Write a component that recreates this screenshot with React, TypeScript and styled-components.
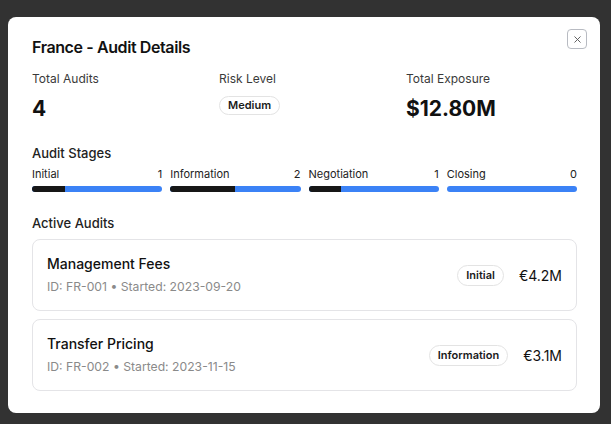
import React from "react";
import styled, { createGlobalStyle } from "styled-components";

const GlobalStyle = createGlobalStyle`
  html, body { margin: 0; padding: 0; background: #323232; }
  body { font-family: Inter, "Noto Sans", sans-serif; color: #111111; -webkit-font-smoothing: antialiased; }
  * { box-sizing: border-box; }
`;

const Backdrop = styled.div`
  min-height: 424px;
  padding: 17px 11px 0 8px;
  display: flex;
  align-items: flex-start;
`;

const Dialog = styled.div`
  position: relative;
  width: 592px;
  background: #ffffff;
  border-radius: 8px;
  padding: 22px 23px 22px 24px;
  display: flex;
  flex-direction: column;
`;

const CloseButton = styled.button`
  position: absolute;
  top: 12px;
  right: 13px;
  width: 20px;
  height: 20px;
  padding: 0;
  border: 1.5px solid #b8bbc2;
  border-radius: 4px;
  background: #ffffff;
  display: flex;
  align-items: center;
  justify-content: center;
  color: #555;
`;

const Title = styled.h2`
  margin: 0;
  font-size: 16px;
  line-height: 16px;
  font-weight: 600;
  letter-spacing: -0.025em;
`;

const StatsGrid = styled.div`
  display: grid;
  grid-template-columns: repeat(3, 1fr);
  gap: 16px;
  margin-top: 16px;
`;

const Stat = styled.div`
  display: flex;
  flex-direction: column;
  gap: 8px;
`;

const StatLabel = styled.div`
  font-size: 12px;
  line-height: 16px;
  color: #3a3a3a;
`;

const StatValue = styled.div`
  font-size: 21px;
  line-height: 28px;
  font-weight: 700;
  height: 28px;
  display: flex;
  align-items: flex-start;
`;

const Badge = styled.span<{ $mt?: number }>`
  display: inline-flex;
  align-items: center;
  height: ${(p) => (p.$mt !== undefined ? 19 : 21)}px;
  padding: 0 8px;
  margin-top: ${(p) => p.$mt ?? 0}px;
  border: 1px solid #e3e3e3;
  border-radius: 999px;
  font-size: 11px;
  font-weight: 600;
  color: #1a1a1a;
  background: #fff;
  line-height: 1;
`;

const SectionTitle = styled.div<{ $mt: number }>`
  margin-top: ${(p) => p.$mt}px;
  font-size: 13px;
  line-height: 20px;
  font-weight: 500;
  color: #222;
`;

const StagesGrid = styled.div`
  display: grid;
  grid-template-columns: repeat(4, 1fr);
  gap: 8px;
  margin-top: 3px;
`;

const Stage = styled.div`
  display: flex;
  flex-direction: column;
  gap: 4px;
`;

const StageHead = styled.div`
  display: flex;
  justify-content: space-between;
  font-size: 11px;
  line-height: 16px;
  color: #222;
`;

const Track = styled.div`
  height: 6px;
  border-radius: 999px;
  background: #3b82f6;
  overflow: hidden;
`;

const Fill = styled.div`
  height: 100%;
  background: #171717;
`;

const CardList = styled.div`
  display: flex;
  flex-direction: column;
  gap: 8px;
  margin-top: 6px;
`;

const Card = styled.div`
  height: 72px;
  border: 1px solid #e4e4e7;
  border-radius: 8px;
  padding: 14px;
  display: flex;
  align-items: center;
  justify-content: space-between;
`;

const CardInfo = styled.div`
  display: flex;
  flex-direction: column;
  gap: 4px;
`;

const CardTitle = styled.div`
  font-size: 14px;
  line-height: 20px;
  font-weight: 500;
`;

const CardMeta = styled.div`
  font-size: 12.2px;
  line-height: 18px;
  color: #8a8a8a;
`;

const CardRight = styled.div`
  display: flex;
  align-items: center;
  gap: 15px;
`;

const Amount = styled.div`
  font-size: 14px;
  font-weight: 400;
`;

const stages = [
  { name: "Initial", count: 1 },
  { name: "Information", count: 2 },
  { name: "Negotiation", count: 1 },
  { name: "Closing", count: 0 },
];

const audits = [
  { title: "Management Fees", id: "FR-001", started: "2023-09-20", stage: "Initial", amount: "€4.2M" },
  { title: "Transfer Pricing", id: "FR-002", started: "2023-11-15", stage: "Information", amount: "€3.1M" },
];

export default function App() {
  const total = 4;
  return (
    <>
      <GlobalStyle />
      <Backdrop>
        <Dialog>
          <CloseButton aria-label="Close">
            <svg width="11" height="11" viewBox="0 0 24 24" fill="none" stroke="currentColor" strokeWidth="2" strokeLinecap="round">
              <path d="M18 6 6 18" />
              <path d="m6 6 12 12" />
            </svg>
          </CloseButton>
          <Title>France - Audit Details</Title>
          <StatsGrid>
            <Stat>
              <StatLabel>Total Audits</StatLabel>
              <StatValue>4</StatValue>
            </Stat>
            <Stat>
              <StatLabel>Risk Level</StatLabel>
              <StatValue>
                <Badge $mt={1}>Medium</Badge>
              </StatValue>
            </Stat>
            <Stat>
              <StatLabel>Total Exposure</StatLabel>
              <StatValue>$12.80M</StatValue>
            </Stat>
          </StatsGrid>

          <SectionTitle $mt={20}>Audit Stages</SectionTitle>
          <StagesGrid>
            {stages.map((s) => (
              <Stage key={s.name}>
                <StageHead>
                  <span>{s.name}</span>
                  <span>{s.count}</span>
                </StageHead>
                <Track>
                  <Fill style={{ width: `${(s.count / total) * 100}%` }} />
                </Track>
              </Stage>
            ))}
          </StagesGrid>

          <SectionTitle $mt={21}>Active Audits</SectionTitle>
          <CardList>
            {audits.map((a) => (
              <Card key={a.id}>
                <CardInfo>
                  <CardTitle>{a.title}</CardTitle>
                  <CardMeta>
                    ID: {a.id} • Started: {a.started}
                  </CardMeta>
                </CardInfo>
                <CardRight>
                  <Badge>{a.stage}</Badge>
                  <Amount>{a.amount}</Amount>
                </CardRight>
              </Card>
            ))}
          </CardList>
        </Dialog>
      </Backdrop>
    </>
  );
}
